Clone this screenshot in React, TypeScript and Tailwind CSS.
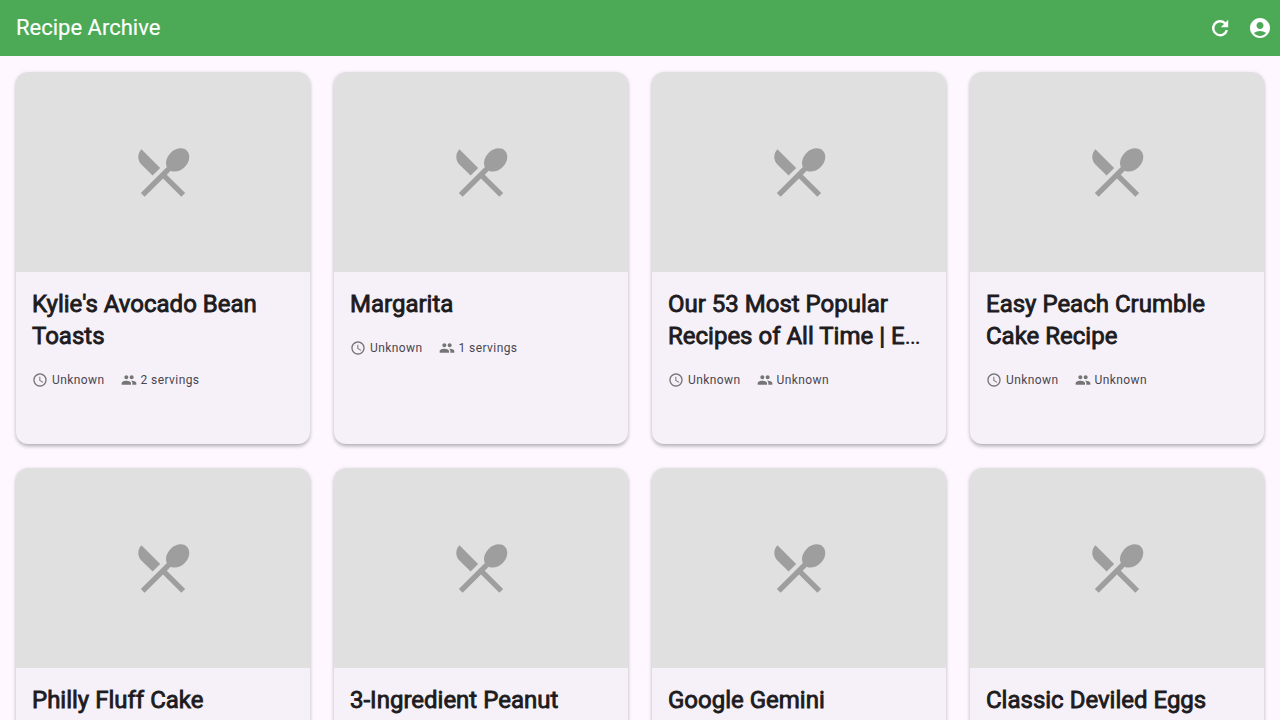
import { MdAccessTime, MdAccountCircle, MdPeople, MdRestaurantMenu } from "react-icons/md";

type Recipe = { lines: string[]; truncated?: boolean; time?: string; servings?: string };

const recipes: Recipe[] = [
  { lines: ["Kylie's Avocado Bean", "Toasts"], time: "Unknown", servings: "2 servings" },
  { lines: ["Margarita"], time: "Unknown", servings: "1 servings" },
  { lines: ["Our 53 Most Popular", "Recipes of All Time | E"], truncated: true, time: "Unknown", servings: "Unknown" },
  { lines: ["Easy Peach Crumble", "Cake Recipe"], time: "Unknown", servings: "Unknown" },
  { lines: ["Philly Fluff Cake"] },
  { lines: ["3-Ingredient Peanut"] },
  { lines: ["Google Gemini"] },
  { lines: ["Classic Deviled Eggs"] },
];

function RefreshIcon() {
  return (
    <svg viewBox="0 0 24 24" className="size-6" fill="none" aria-hidden="true">
      <path d="M18.9 14.2A7 7 0 1 1 16.95 7.05L18 8.1" stroke="currentColor" strokeWidth="2.4" />
      <path d="M20.2 3.8v7.4h-7.4z" fill="currentColor" />
    </svg>
  );
}

function RecipeCard({ recipe }: { recipe: Recipe }) {
  return (
    <article className="flex h-[371.6px] flex-col overflow-hidden rounded-xl bg-[#f6f1f9] shadow-[0_3px_4px_-1px_rgba(0,0,0,0.24),0_1px_4px_rgba(0,0,0,0.14)]">
      <div className="flex h-[200px] shrink-0 items-center justify-center bg-[#e0e0e0]">
        <MdRestaurantMenu className="size-16 text-[#9e9e9e]" />
      </div>
      <div className="flex flex-col gap-5 p-4">
        <h2 className="text-2xl leading-8 font-normal whitespace-nowrap text-[#1d1b20] [-webkit-text-stroke:0.85px_#1d1b20]">
          {recipe.lines.map((line, i) => (
            <span key={line} className="block">
              {line}
              {recipe.truncated && i === recipe.lines.length - 1 && (
                <span className="[-webkit-text-stroke:0]">…</span>
              )}
            </span>
          ))}
        </h2>
        {recipe.time && (
          <div className="flex items-center gap-4 text-xs leading-4 tracking-[0.42px] text-[#49454f]">
            <span className="flex items-center gap-1">
              <MdAccessTime className="size-4 text-[#757575]" />
              {recipe.time}
            </span>
            <span className="flex items-center gap-1">
              <MdPeople className="size-4 text-[#757575]" />
              {recipe.servings}
            </span>
          </div>
        )}
      </div>
    </article>
  );
}

export default function App() {
  return (
    <div className="flex h-screen flex-col overflow-hidden bg-[#fef7ff] font-[Roboto,sans-serif]">
      <header className="flex h-14 shrink-0 items-center justify-between bg-[#4caa56] pr-2 pl-4 text-white">
        <h1 className="text-[22px] leading-7 [-webkit-text-stroke:0.15px_white]">Recipe Archive</h1>
        <div className="flex gap-4">
          <button aria-label="Refresh">
            <RefreshIcon />
          </button>
          <button aria-label="Account">
            <MdAccountCircle className="size-6" />
          </button>
        </div>
      </header>
      <main className="grid min-h-0 flex-1 grid-cols-4 content-start gap-6 overflow-hidden p-4">
        {recipes.map((recipe) => (
          <RecipeCard key={recipe.lines[0]} recipe={recipe} />
        ))}
      </main>
    </div>
  );
}
